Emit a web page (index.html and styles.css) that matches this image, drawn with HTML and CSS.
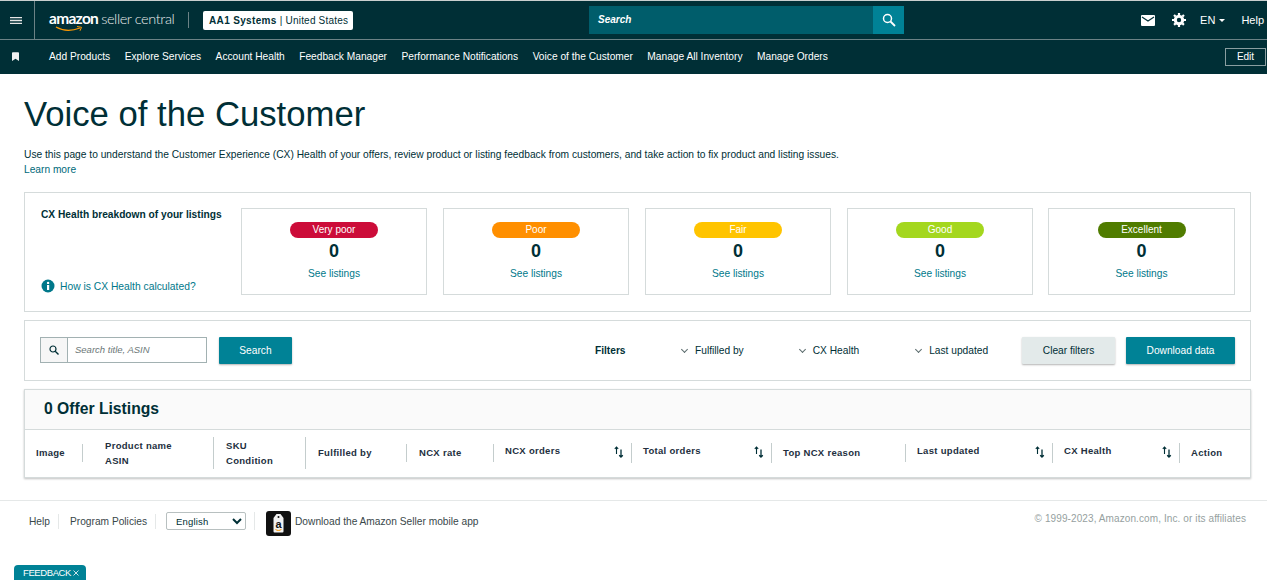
FILE: index.html
```html
<!DOCTYPE html>
<html lang="en">
<head>
    <meta charset="UTF-8">
    <title>Voice of the Customer</title>
    <link rel="stylesheet" href="styles.css">
</head>
<body>
    <svg class="sprite" width="0" height="0">
        <symbol id="sort-icon" viewBox="0 0 10 12">
            <path d="M2.500 8V1M.8 2.800L2.500 1l1.700 1.800" fill="none" stroke="#002f36" stroke-width="1.100"/>
            <path d="M7 3.500v7.500M5.200 9.200L7 11l1.800-1.800" fill="none" stroke="#002f36" stroke-width="1.300"/>
        </symbol>
    </svg>

    <header class="topbar">
        <div class="topbar-main">
            <div class="menu-btn">
                <svg width="12" height="7" viewBox="0 0 12 7"><path d="M0 .7h12M0 3.500h12M0 6.300h12" stroke="#e6e6e6" stroke-width="1.300"/></svg>
            </div>
            <div class="logo">
                <span class="logo-amazon">amazon</span>
                <span class="logo-seller">seller central</span>
                <svg class="logo-smile" width="28" height="6" viewBox="0 0 28 6"><path d="M1 1c7 4 16 4 24 1" fill="none" stroke="#ff9900" stroke-width="1.300"/><path d="M22 0.500l4.500 .8-1.500 3.500" fill="none" stroke="#ff9900" stroke-width="1"/></svg>
            </div>
            <div class="logo-sep"></div>
            <div class="account"><b>AA1 Systems</b> | United States</div>
            <form class="top-search">
                <span class="top-search-text">Search</span>
                <span class="top-search-btn">
                    <svg width="14" height="14" viewBox="0 0 14 14"><circle cx="5.500" cy="5.500" r="4" fill="none" stroke="#fff" stroke-width="1.500"/><path d="M8.500 8.500l4.500 4.500" stroke="#fff" stroke-width="1.800"/></svg>
                </span>
            </form>
            <div class="top-right">
                <svg class="top-mail" width="14" height="11" viewBox="0 0 14 11"><rect width="14" height="11" rx="1" fill="#fff"/><path d="M1 2l6 4 6-4" fill="none" stroke="#002f36" stroke-width="1.200"/></svg>
                <svg class="top-gear" width="14" height="14" viewBox="0 0 14 14"><circle cx="7" cy="7" r="3.700" fill="none" stroke="#fff" stroke-width="3"/><path d="M7 0v14M0 7h14M2 2l10 10M12 2L2 12" stroke="#fff" stroke-width="2.200" stroke-dasharray="2.200 9.600 2.200"/></svg>
                <span class="top-lang">EN<i class="caret"></i></span>
                <span class="top-help">Help</span>
            </div>
        </div>
        <nav class="topbar-nav">
            <svg class="nav-mark" width="7" height="9" viewBox="0 0 8 10"><path d="M0 1a1 1 0 0 1 1-1h6a1 1 0 0 1 1 1v9L4 7.500 0 10z" fill="#f0f0f0"/></svg>
            <a href="#">Add Products</a>
            <a href="#">Explore Services</a>
            <a href="#">Account Health</a>
            <a href="#">Feedback Manager</a>
            <a href="#">Performance Notifications</a>
            <a href="#">Voice of the Customer</a>
            <a href="#">Manage All Inventory</a>
            <a href="#">Manage Orders</a>
            <button type="button" class="edit-btn">Edit</button>
        </nav>
    </header>

    <main class="page">
        <h1>Voice of the Customer</h1>
        <p class="intro">Use this page to understand the Customer Experience (CX) Health of your offers, review product or listing feedback from customers, and take action to fix product and listing issues.</p>
        <a class="learn" href="#">Learn more</a>

        <section class="box health">
            <div class="health-side">
                <strong>CX Health breakdown of your listings</strong>
                <div class="health-how">
                    <svg width="14" height="14" viewBox="0 0 14 14"><circle cx="7" cy="7" r="6.500" fill="#00788a"/><rect x="6" y="6" width="2.200" height="5" fill="#fff"/><circle cx="7.100" cy="3.900" r="1.200" fill="#fff"/></svg>
                    <a href="#">How is CX Health calculated?</a>
                </div>
            </div>
            <div class="health-card"><span class="pill very-poor">Very poor</span><span class="count">0</span><a href="#">See listings</a></div>
            <div class="health-card"><span class="pill poor">Poor</span><span class="count">0</span><a href="#">See listings</a></div>
            <div class="health-card"><span class="pill fair">Fair</span><span class="count">0</span><a href="#">See listings</a></div>
            <div class="health-card"><span class="pill good">Good</span><span class="count">0</span><a href="#">See listings</a></div>
            <div class="health-card"><span class="pill excellent">Excellent</span><span class="count">0</span><a href="#">See listings</a></div>
        </section>

        <section class="box filters">
            <div class="search-field">
                <span class="search-icon">
                    <svg width="10" height="10" viewBox="0 0 10 10"><circle cx="4" cy="4" r="3" fill="none" stroke="#002f36" stroke-width="1.200"/><path d="M6.200 6.200L9.500 9.500" stroke="#002f36" stroke-width="1.400"/></svg>
                </span>
                <span class="search-placeholder">Search title, ASIN</span>
            </div>
            <button type="button" class="btn btn-primary btn-search">Search</button>
            <strong class="filters-label">Filters</strong>
            <span class="filter filter-fulfilled">Fulfilled by</span>
            <span class="filter filter-health">CX Health</span>
            <span class="filter filter-updated">Last updated</span>
            <button type="button" class="btn btn-light">Clear filters</button>
            <button type="button" class="btn btn-primary btn-download">Download data</button>
        </section>

        <section class="listings">
            <h2>0 Offer Listings</h2>
            <div class="table-head">
                <div class="col col-image">Image</div>
                <div class="col col-name"><span>Product name</span><span>ASIN</span></div>
                <div class="col col-sku"><span>SKU</span><span>Condition</span></div>
                <div class="col col-fulfilled">Fulfilled by</div>
                <div class="col col-rate">NCX rate</div>
                <div class="col col-sort col-orders">NCX orders<svg class="sort"><use href="#sort-icon"/></svg></div>
                <div class="col col-sort col-total">Total orders<svg class="sort"><use href="#sort-icon"/></svg></div>
                <div class="col col-reason">Top NCX reason</div>
                <div class="col col-sort col-updated">Last updated<svg class="sort"><use href="#sort-icon"/></svg></div>
                <div class="col col-sort col-health">CX Health<svg class="sort"><use href="#sort-icon"/></svg></div>
                <div class="col col-action">Action</div>
            </div>
        </section>
    </main>

    <footer class="footer">
        <a href="#" class="foot-help">Help</a>
        <a href="#" class="foot-policy">Program Policies</a>
        <div class="foot-lang">
            <select><option>English</option></select>
        </div>
        <div class="foot-app">
            <svg width="25" height="25" viewBox="0 0 25 25">
                <rect width="25" height="25" rx="3" fill="#111"/>
                <path d="M7.500 7l3-4h4l3 4v13.500a1 1 0 0 1-1 1h-8a1 1 0 0 1-1-1z" fill="#f2f2f2"/>
                <circle cx="12.500" cy="6" r="1" fill="#111"/>
                <text x="12.500" y="16.500" text-anchor="middle" class="app-letter">a</text>
                <path d="M9.500 18.500c2 1.300 4 1.300 6-.2" fill="none" stroke="#f90" stroke-width="1"/>
            </svg>
            <a href="#">Download the Amazon Seller mobile app</a>
        </div>
        <span class="copyright">© 1999-2023, Amazon.com, Inc. or its affiliates</span>
    </footer>

    <div class="feedback">FEEDBACK
        <svg width="6" height="6" viewBox="0 0 6 6"><path d="M.5 .5l5 5M5.500 .5l-5 5" stroke="#fff" stroke-width=".8"/></svg>
    </div>
</body>
</html>
```

FILE: styles.css
```css
* {
    box-sizing: border-box;
}
html, body {
    height: 100%;
    overflow: hidden;
}
body {
    margin: 0;
    font-family: "Liberation Sans", Arial, sans-serif;
    font-size: 10.2px;
    color: #002f36;
    background-color: #fff;
}
a {
    color: #00788a;
    text-decoration: none;
}
.sprite {
    position: absolute;
}

/* top bar */
.topbar {
    background-color: #002f36;
    color: #fff;
    border-top: 1px solid #c9cfcf;
}
.topbar-main {
    display: flex;
    align-items: center;
    height: 39px;
    border-bottom: 1px solid #6c8286;
}
.menu-btn {
    width: 35px;
    height: 38px;
    padding-right: 2px;
    display: flex;
    align-items: center;
    justify-content: center;
    border-right: 1px solid #6c8286;
}
.logo {
    position: relative;
    display: flex;
    align-items: baseline;
    margin-left: 14px;
    width: 125px;
    height: 26px;
    padding-top: 2px;
    white-space: nowrap;
}
.logo-amazon {
    font-family: "Lato", sans-serif;
    font-size: 15.500px;
    font-weight: 700;
    letter-spacing: -0.7px;
}
.logo-seller {
    font-family: "Lato", sans-serif;
    font-size: 14.500px;
    font-weight: 300;
    margin-left: 3px;
    letter-spacing: -0.4px;
    color: #e8ecec;
}
.logo-smile {
    position: absolute;
    left: 6px;
    top: 19px;
}
.logo-sep {
    width: 1px;
    height: 16px;
    margin-left: 14px;
    background-color: #6c8286;
}
.account {
    margin-left: 14px;
    padding: 0 6px;
    height: 19px;
    width: 150px;
    line-height: 19px;
    background-color: #fff;
    border-radius: 2px;
    color: #002f36;
    font-size: 10px;
    letter-spacing: 0.2px;
    white-space: nowrap;
}
.account b {
    letter-spacing: 0.35px;
}
.top-search {
    display: flex;
    margin-left: 236px;
    width: 315px;
    height: 28px;
    background-color: #005d6b;
}
.top-search-text {
    flex: 1;
    padding-left: 9px;
    line-height: 28px;
    font-size: 10px;
    font-style: italic;
    font-weight: bold;
}
.top-search-btn {
    width: 31px;
    display: flex;
    align-items: center;
    justify-content: center;
    background-color: #008296;
}
.top-right {
    display: flex;
    align-items: center;
    margin-left: auto;
    padding-right: 3px;
    font-size: 11px;
}
.top-gear {
    margin-left: 17px;
}
.top-lang {
    margin-left: 14px;
}
.caret {
    display: inline-block;
    margin-left: 4px;
    vertical-align: 2px;
    border: 3.500px solid transparent;
    border-top-color: #fff;
    border-bottom: 0;
}
.top-help {
    margin-left: 16px;
}
.topbar-nav {
    display: flex;
    align-items: center;
    height: 34px;
    padding: 0 0 1px 12px;
}
.topbar-nav a {
    margin-right: 14.500px;
    color: #fff;
    white-space: nowrap;
}
.nav-mark {
    margin-right: 30px;
}
.edit-btn {
    margin-left: auto;
    margin-right: 1px;
    width: 41px;
    height: 18px;
    padding: 0;
    background: none;
    border: 1px solid #8a9ea1;
    color: #fff;
    font: 10px "Liberation Sans", Arial, sans-serif;
}

/* page */
.page {
    padding: 0 16px 0 24px;
}
h1 {
    margin: 20px 0 0;
    font-size: 34.700px;
    line-height: 40px;
    font-weight: normal;
}
.intro {
    margin: 14px 0 0;
    line-height: 14px;
    font-size: 10.220px;
}
.learn {
    display: block;
    line-height: 16px;
    color: #00697a;
}
.box {
    border: 1px solid #d5dbdb;
    display: flex;
}
.health {
    margin-top: 14px;
    height: 120px;
    padding: 15px 15px 16px 16px;
    gap: 16px;
}
.health-side {
    width: 184px;
    display: flex;
    flex-direction: column;
    justify-content: space-between;
    padding-bottom: 2px;
}
.health-side strong {
    line-height: 13px;
}
.health-how {
    display: flex;
    align-items: center;
    gap: 5px;
    font-size: 10.300px;
}
.health-card {
    width: 186px;
    display: flex;
    flex-direction: column;
    align-items: center;
    padding-top: 13px;
    border: 1px solid #d5dbdb;
}
.health-card:last-child {
    width: 187px;
    margin-left: -1px;
}
.pill {
    width: 88px;
    height: 16px;
    line-height: 16px;
    border-radius: 8px;
    text-align: center;
    color: #fff;
    font-size: 10px;
}
.very-poor { background-color: #cc0c39; }
.poor { background-color: #ff8f00; }
.fair { background-color: #ffc400; }
.good { background-color: #a4d71e; }
.excellent { background-color: #507c00; }
.count {
    font-size: 18px;
    font-weight: bold;
    line-height: 26px;
    margin-bottom: 4px;
}
.filters {
    margin-top: 8px;
    height: 61px;
    align-items: center;
    padding: 0 15px;
}
.search-field {
    display: flex;
    width: 167px;
    height: 26px;
    margin-bottom: 2px;
    border: 1px solid #a2b1b2;
}
.search-icon {
    width: 27px;
    display: flex;
    align-items: center;
    justify-content: center;
    background-color: #f6f6f6;
    border-right: 1px solid #a2b1b2;
}
.search-placeholder {
    padding-left: 7px;
    line-height: 24px;
    font-size: 9.500px;
    font-style: italic;
    color: #6c7778;
}
.btn {
    height: 27px;
    padding: 0;
    border: none;
    border-radius: 1px;
    font: 10.200px "Liberation Sans", Arial, sans-serif;
    box-shadow: 0 1px 2px rgba(0, 0, 0, 0.3);
}
.btn-primary {
    background-color: #008296;
    color: #fff;
}
.btn-light {
    background-color: #e3eaea;
    color: #002f36;
    width: 93px;
    margin-left: 34px;
}
.btn-search {
    width: 73px;
    margin-left: 12px;
}
.btn-download {
    width: 109px;
    margin-left: 11px;
}
.filters-label {
    margin-left: 303px;
}
.filter {
    position: relative;
    white-space: nowrap;
}
.filter::before {
    content: "";
    position: absolute;
    left: -13px;
    top: 2px;
    width: 4px;
    height: 4px;
    border-right: 1px solid #5b6b6d;
    border-bottom: 1px solid #5b6b6d;
    transform: rotate(45deg);
}
.filter-fulfilled {
    margin-left: 69.500px;
}
.filter-health {
    margin-left: 69px;
}
.filter-updated {
    margin-left: 70px;
}
.listings {
    margin-top: 8px;
    border: 1px solid #d5dbdb;
    box-shadow: 0 1px 2px rgba(0, 0, 0, 0.25);
}
.listings h2 {
    margin: 0;
    height: 40px;
    padding-left: 19px;
    line-height: 38px;
    font-size: 15.700px;
    font-weight: bold;
    background-color: #fafafa;
    border-bottom: 1px solid #d5dbdb;
}
.table-head {
    display: flex;
    align-items: center;
    height: 47px;
    padding-bottom: 2px;
    font-size: 9.500px;
    font-weight: bold;
    letter-spacing: 0.3px;
    line-height: 15px;
    color: #232f3e;
}
.col {
    position: relative;
    display: flex;
    flex-direction: column;
    justify-content: center;
    min-height: 18px;
    padding-left: 12px;
    border-right: 1px solid #c4cdcd;
}
.col-name,
.col-sku {
    min-height: 32px;
}
.col-sort {
    justify-content: flex-start;
    min-height: 20px;
    padding-left: 11px;
}
.col-image { width: 58px; padding-left: 11px; }
.col-name { width: 131px; padding-left: 22px; }
.col-sku { width: 92px; }
.col-fulfilled { width: 101px; }
.col-rate { width: 87px; }
.col-orders { width: 138px; }
.col-total { width: 140px; }
.col-reason { width: 134px; padding-left: 11px; }
.col-updated { width: 147px; }
.col-health { width: 127px; }
.col-action { width: 70px; padding-left: 11px; border-right: none; }
.sort {
    position: absolute;
    right: 7px;
    top: 3px;
    width: 10px;
    height: 12px;
}

/* footer */
.footer {
    display: flex;
    align-items: flex-start;
    margin-top: 22px;
    height: 43px;
    padding: 10px 21px 0 29px;
    border-top: 1px solid #e5e8e8;
    line-height: 18px;
}
.footer a {
    color: #39474a;
}
.foot-help,
.foot-policy {
    margin-top: 3px;
    line-height: 15px;
    border-right: 1px solid #e5e8e8;
}
.foot-help {
    width: 30px;
}
.foot-policy {
    width: 97px;
    padding-left: 11px;
}
.foot-lang {
    width: 99px;
    margin-top: 1px;
    padding-left: 10px;
    border-right: 1px solid #e5e8e8;
}
.foot-lang select {
    display: block;
    width: 80px;
    height: 18px;
    font: 9.500px "Liberation Sans", Arial, sans-serif;
    letter-spacing: 0.2px;
    color: #002f36;
    background-color: #fff;
    border: 1px solid #b8c0c0;
    border-radius: 2px;
    padding-left: 5px;
}
.foot-app {
    display: flex;
    align-items: flex-start;
    gap: 4px;
    margin-left: 11px;
}
.foot-app a {
    margin-top: 2px;
}
.app-letter {
    font: bold 11px "Liberation Sans", Arial, sans-serif;
    fill: #111;
}
.copyright {
    margin-top: 1px;
    margin-left: auto;
    line-height: 14px;
    font-size: 10px;
    letter-spacing: 0.1px;
    color: #969fa0;
}
.feedback {
    position: fixed;
    left: 14px;
    bottom: 0;
    width: 72px;
    height: 15px;
    padding-left: 9px;
    line-height: 16px;
    font-size: 9.500px;
    letter-spacing: -0.4px;
    color: #fff;
    background-color: #008296;
    border-radius: 4px 4px 0 0;
    white-space: nowrap;
}
```
